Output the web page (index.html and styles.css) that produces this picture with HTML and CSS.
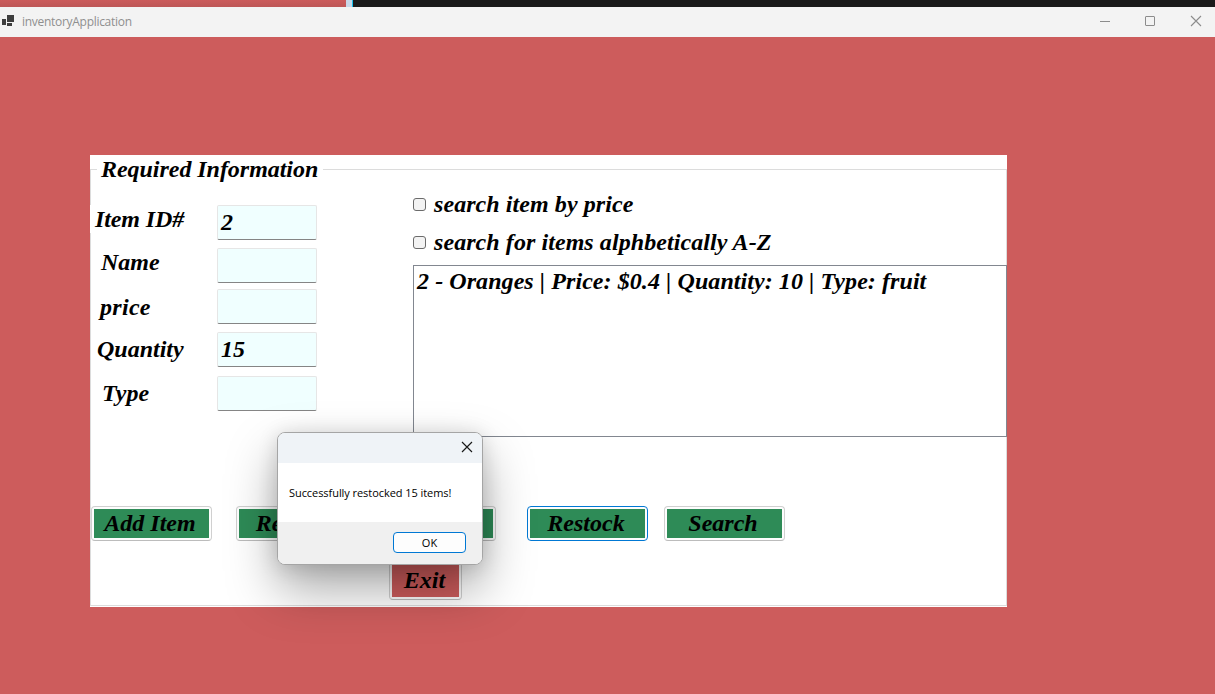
FILE: index.html
```
<!DOCTYPE html>
<html lang="en">
<head>
<meta charset="utf-8">
<title>inventoryApplication</title>
<link rel="stylesheet" href="styles.css">
</head>
<body>
<div class="strip"><div class="strip-red"></div><div class="strip-blue"></div></div>
<header class="titlebar">
  <svg class="app-icon" width="14" height="14" viewBox="0 0 14 14" shape-rendering="crispEdges"><path fill="#3e3e3e" d="M6 1h7v7H6zM1 5h4v6H1zM6 9h5v3H6z"/></svg>
  <span class="app-name">inventoryApplication</span>
  <div class="controls">
    <svg width="12" height="12" viewBox="0 0 12 12"><path d="M2 6.5h10" stroke="#8c8c8c"/></svg>
    <svg width="12" height="12" viewBox="0 0 12 12"><rect x="1.5" y="1.5" width="9" height="9" rx=".5" fill="none" stroke="#8c8c8c"/></svg>
    <svg width="12" height="12" viewBox="0 0 12 12"><path d="M1 1l10 10M11 1L1 11" stroke="#8c8c8c" stroke-width="1.1"/></svg>
  </div>
</header>
<main class="client">
  <section class="panel">
    <h1 class="legend"><span>Required Information</span></h1>
    <div class="columns">
      <div class="fields">
        <div class="row id"><label><span>Item ID#</span></label><div class="input">2</div></div>
        <div class="row name"><label><span>Name</span></label><div class="input"></div></div>
        <div class="row price"><label><span>price</span></label><div class="input"></div></div>
        <div class="row quantity"><label><span>Quantity</span></label><div class="input">15</div></div>
        <div class="row type"><label><span>Type</span></label><div class="input"></div></div>
      </div>
      <div class="results">
        <div class="check"><i class="box"></i><span>search item by price</span></div>
        <div class="check"><i class="box"></i><span>search for items alphbetically A-Z</span></div>
        <div class="list"><span>2 - Oranges | Price: $0.4 | Quantity: 10 | Type: fruit</span></div>
      </div>
    </div>
    <div class="buttons">
      <div class="btn add"><span>Add Item</span></div>
      <div class="btn remove"><span>Remove</span></div>
      <div class="btn covered"></div>
      <div class="btn restock"><span>Restock</span></div>
      <div class="btn search"><span>Search</span></div>
    </div>
    <div class="btn exit"><span>Exit</span></div>
  </section>
</main>
<div class="dialog">
  <div class="dialog-head"><svg width="12" height="12" viewBox="0 0 12 12"><path d="M1 1l10 10M11 1L1 11" stroke="#191919" stroke-width="1.15"/></svg></div>
  <div class="dialog-body"><span>Successfully restocked 15 items!</span></div>
  <div class="dialog-foot"><div class="ok">OK</div></div>
</div>
</body>
</html>
```
FILE: styles.css
```
* { box-sizing: border-box; }
body { margin: 0; width: 1215px; height: 694px; overflow: hidden; position: relative; background: #cd5c5c; font: italic bold 24px/27px "Liberation Serif", serif; color: #000; }
svg { display: block; }
.strip { display: flex; height: 7px; background: #1a1a1a; }
.strip-red { width: 346px; background: linear-gradient(#cb5b5b, #bd5656); }
.strip-blue { width: 7px; background: #c8d8e8; border-right: 1px solid #19c2ee; }
.titlebar { display: flex; align-items: center; height: 30px; background: #f3f3f3; padding: 0 13px 0 1px; font: 12px/16px "Open Sans", sans-serif; color: #8f8f8f; }
.app-icon { margin-top: -2px; }
.app-name { margin-left: 7px; letter-spacing: -0.29px; }
.controls { display: flex; gap: 34px; margin-left: auto; margin-top: -2px; }
.client { padding: 118px 0 0 90px; }
.panel { position: relative; display: flex; flex-direction: column; width: 917px; height: 452px; background: #fff; }
.panel::before { content: ""; position: absolute; inset: 14px 0 1px 0; border: 1px solid #dcdcdc; }
.panel > * { position: relative; }
.legend { font: inherit; letter-spacing: -0.04px; margin: 1px 0 0 7px; height: 27px; width: 226px; padding-left: 4px; background: #fff; white-space: nowrap; }
.columns { display: flex; height: 323px; }
.fields { width: 323px; padding-top: 22px; }
.row { display: flex; height: 35px; }
.row label { width: 127px; white-space: nowrap; }
.input { width: 100px; height: 35px; background: #f0ffff; border: 1px solid #e6e6e6; border-bottom-color: #858585; border-radius: 2px; padding: 3px; }
.id label { height: 28px; padding: 1px 0 0 5px; background: #fff; letter-spacing: -0.1px; }
.name { margin-top: 8px; }
.name label { padding: 1px 0 0 11px; }
.price { margin-top: 6px; }
.price label { padding: 5px 0 0 10px; letter-spacing: 0.3px; }
.quantity { margin-top: 8px; }
.quantity label { padding: 4px 0 0 7px; }
.type { margin-top: 9px; }
.type label { padding: 4px 0 0 12px; }
.results { flex: 1; padding-top: 8px; white-space: nowrap; letter-spacing: 0.07px; }
.check { display: flex; align-items: center; gap: 8px; height: 27px; margin-bottom: 11px; }
.box { width: 13px; height: 13px; border: 1px solid #6b6b6b; border-radius: 3px; background: #f3f3f3; }
.list { height: 172px; margin-top: -2px; border: 1px solid #828790; background: #fff; padding: 2px 3px; }
.buttons { display: flex; height: 35px; padding-left: 1px; }
.btn { width: 121px; height: 35px; border: 1px solid #d0d0d0; border-bottom-color: #bcbcbc; border-radius: 4px; background: linear-gradient(#2e8b57, #2e8b57) 2px 2px / calc(100% - 4px) calc(100% - 4px) no-repeat #fdfdfd; padding: 3px 5px 0 2px; text-align: center; white-space: nowrap; }
.remove { margin-left: 24px; }
.covered { margin-left: 18px; }
.restock { margin-left: 31px; border-color: #0078d4; }
.search { margin-left: 16px; }
.exit { width: 73px; height: 38px; margin: 21px 0 0 299px; padding-top: 4px; padding-right: 4px; background-image: linear-gradient(#cd5c5c, #cd5c5c); }
.dialog { position: absolute; left: 277px; top: 432px; width: 206px; height: 133px; border: 1px solid #a5a5a5; border-radius: 8px; overflow: hidden; background: #fff; box-shadow: 0 24px 50px rgba(0,0,0,.34), 0 2px 20px rgba(0,0,0,.14); font: 11px/15px "Open Sans", sans-serif; }
.dialog-head { height: 30px; background: #eff3f7; display: flex; justify-content: flex-end; padding: 8px 9px; }
.dialog-body { height: 59px; padding: 22px 0 0 11px; white-space: nowrap; letter-spacing: -0.06px; }
.dialog-foot { height: 42px; background: #f0f0f0; display: flex; justify-content: flex-end; padding: 10px 16px 0 0; }
.ok { width: 73px; height: 21px; border: 1px solid #0078d4; border-radius: 4px; background: #fdfdfd; text-align: center; line-height: 19px; }
```
